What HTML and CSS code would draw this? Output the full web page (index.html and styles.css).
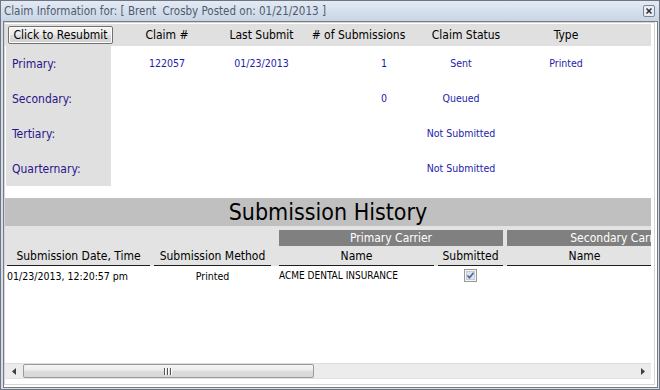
FILE: index.html
```html
<html>

<head>
  <link rel="stylesheet" href="styles.css">
</head>

<body>
  <div class="window">
    <div class="titlebar">
      <span class="title">Claim Information for: [ Brent  Crosby Posted on: 01/21/2013 ]</span>
      <svg class="close-btn" width="12" height="12" viewBox="0 0 12 12">
        <rect x="0.5" y="0.5" width="11" height="11" rx="1.5" fill="#e9eef5" stroke="#7a8596" />
        <path d="M3.5 3.5l5 5M8.5 3.5l-5 5" stroke="#303030" stroke-width="1.5" />
      </svg>
    </div>

    <div class="frame">
      <div class="pane">
        <div class="view">

          <!-- claim grid -->
          <div class="claims">
            <div class="claims-head">
              <div><button class="resubmit">Click to Resubmit</button></div>
              <div class="col">Claim #</div>
              <div class="col">Last Submit</div>
              <div class="col"># of Submissions</div>
              <div class="col">Claim Status</div>
              <div class="col">Type</div>
            </div>
            <div class="claim-row">
              <div class="claim-label">Primary:</div>
              <div class="val">122057</div>
              <div class="val">01/23/2013</div>
              <div class="val v-count">1</div>
              <div class="val v-status">Sent</div>
              <div class="val">Printed</div>
            </div>
            <div class="claim-row">
              <div class="claim-label">Secondary:</div>
              <div class="val"></div>
              <div class="val"></div>
              <div class="val v-count">0</div>
              <div class="val v-status">Queued</div>
              <div class="val"></div>
            </div>
            <div class="claim-row">
              <div class="claim-label">Tertiary:</div>
              <div class="val"></div>
              <div class="val"></div>
              <div class="val v-count"></div>
              <div class="val v-status">Not Submitted</div>
              <div class="val"></div>
            </div>
            <div class="claim-row">
              <div class="claim-label">Quarternary:</div>
              <div class="val"></div>
              <div class="val"></div>
              <div class="val v-count"></div>
              <div class="val v-status">Not Submitted</div>
              <div class="val"></div>
            </div>
          </div>

          <!-- history -->
          <div class="history-title">Submission History</div>
          <div class="history-head">
            <div class="carrier carrier-1">Primary Carrier</div>
            <div class="carrier carrier-2">Secondary Carrier</div>
            <div class="hcol c-date">Submission Date, Time</div>
            <div class="hcol c-method">Submission Method</div>
            <div class="hcol c-name">Name</div>
            <div class="hcol c-sub">Submitted</div>
            <div class="hcol c-name2">Name</div>
            <div class="hcol c-sub2">Submitted</div>
          </div>
          <div class="history-row">
            <div class="d-date">01/23/2013, 12:20:57 pm</div>
            <div class="d-method">Printed</div>
            <div class="d-name">ACME DENTAL INSURANCE</div>
            <div class="d-sub">
              <svg width="13" height="13" viewBox="0 0 13 13">
                <rect x="0.5" y="0.5" width="12" height="12" fill="#f4f4f4" stroke="#9a9a9a" />
                <rect x="2.5" y="2.5" width="8" height="8" fill="#dfe3ea" stroke="#c4c9d2" />
                <path d="M3.5 6.5l2 2.2 4-5" fill="none" stroke="#4a62a8" stroke-width="1.6" />
              </svg>
            </div>
            <div></div>
            <div></div>
          </div>

          <!-- horizontal scrollbar -->
          <div class="hscroll">
            <div class="arrow">
              <svg width="4" height="7" viewBox="0 0 4 7"><path d="M4 0L0 3.5L4 7z" fill="#404040" /></svg>
            </div>
            <div class="thumb">
              <svg width="9" height="7" viewBox="0 0 9 7">
                <path d="M0.5 0v7M3.5 0v7M6.5 0v7" stroke="#555" />
                <path d="M1.5 0v7M4.5 0v7M7.5 0v7" stroke="#fff" />
              </svg>
            </div>
            <div class="track"></div>
            <div class="arrow">
              <svg width="4" height="7" viewBox="0 0 4 7"><path d="M0 0L4 3.5L0 7z" fill="#404040" /></svg>
            </div>
          </div>

        </div>
      </div>
    </div>
  </div>
</body>

</html>
```

FILE: styles.css
```css
* {
  box-sizing: border-box;
}

html,
body {
  margin: 0;
  padding: 0;
}

body {
  width: 660px;
  height: 390px;
  overflow: hidden;
  background: #ffffff;
  font-family: "DejaVu Sans Condensed", "DejaVu Sans", sans-serif;
}

.window {
  width: 660px;
  height: 390px;
  border: 1px solid #6e7683;
  background: linear-gradient(#e3eaf3, #c8d5e6 20px, #d3deeb 21px, #d3deeb);
  display: flex;
  flex-direction: column;
}

/* title bar */
.titlebar {
  height: 20px;
  flex: none;
  display: flex;
  align-items: center;
  justify-content: space-between;
  padding: 0 4px 0 3px;
}

.title {
  font-size: 11.5px;
  color: #4f5b6c;
  white-space: pre;
}

.close-btn {
  display: block;
}

.frame {
  flex: 1;
  margin: 0 1px 1px 2px;
  border: 1px solid #7b7b7b;
  background: #ffffff;
  padding: 0 2px 2px 0;
  display: flex;
}

.pane {
  flex: 1;
  border: 1px solid #d6d6d6;
  padding: 0 3px 5px 0;
  display: flex;
  min-width: 0;
}

.view {
  flex: 1;
  min-width: 0;
  overflow: hidden;
  display: flex;
  flex-direction: column;
}

/* claim grid */
.claims {
  margin-top: 1px;
}

.claims-head,
.claim-row {
  display: grid;
  grid-template-columns: 106px 112px 77px 117px 98px 102px 1fr;
}

.claims-head {
  height: 22px;
  background: #e0e0e0;
  align-items: center;
  font-size: 12px;
  color: #000000;
}

.claims-head .col {
  text-align: center;
}

.resubmit {
  display: block;
  margin-left: 3px;
  width: 105px;
  height: 18px;
  padding: 0;
  border: 1px solid #707070;
  border-radius: 2px;
  background: linear-gradient(#f3f3f3, #ebebeb 50%, #dddddd 51%, #cfcfcf);
  box-shadow: inset 0 0 0 1px #fcfcfc;
  font-family: inherit;
  font-size: 12px;
  color: #000000;
}

.claim-row {
  height: 35px;
  align-items: center;
}

.claim-label {
  margin-left: 1px;
  height: 100%;
  background: #e0e0e0;
  display: flex;
  align-items: center;
  padding: 1px 0 0 6px;
  font-size: 12px;
  color: #28148a;
}

.val {
  text-align: center;
  font-size: 10.5px;
  color: #1c1cab;
  padding-bottom: 2px;
}

.v-count {
  padding-left: 51px;
}

.v-status {
  padding-right: 10px;
}

/* submission history */
.history-title {
  margin-top: 12px;
  height: 28px;
  flex: none;
  background: #c0c0c0;
  text-align: center;
  font-size: 23px;
  line-height: 28px;
  color: #000000;
}

.history-head,
.history-row {
  display: grid;
  grid-template-columns: 143px 121px 155px 65px 155px 65px;
  column-gap: 4px;
  padding-left: 2px;
  flex: none;
}

.history-head {
  height: 40px;
  padding-top: 4px;
  grid-template-rows: 16px 20px;
  background: #e3e3e3;
  font-size: 12px;
}

.carrier {
  grid-row: 1;
  background: #808080;
  color: #ffffff;
  text-align: center;
  line-height: 16px;
  white-space: nowrap;
}

.carrier-1 {
  grid-column: 3 / span 2;
}

.carrier-2 {
  grid-column: 5 / span 2;
}

.hcol {
  grid-row: 2;
  border-bottom: 1px solid #1e1e1e;
  text-align: center;
  line-height: 20px;
  color: #000000;
  white-space: nowrap;
}

.c-method {
  margin-right: 4px;
}

.history-row {
  height: 19px;
  align-items: center;
  font-size: 10.5px;
  color: #000000;
  white-space: nowrap;
}

.d-method {
  margin-right: 4px;
  text-align: center;
}

.d-name {
  font-size: 10px;
}

.d-sub {
  display: flex;
  justify-content: center;
}

.d-sub svg {
  display: block;
}

/* horizontal scrollbar */
.hscroll {
  margin-top: auto;
  height: 16px;
  flex: none;
  background: #ececec;
  border-top: 1px solid #dcdcdc;
  border-bottom: 1px solid #e2e2e2;
  display: flex;
  align-items: center;
}

.arrow {
  width: 17px;
  height: 100%;
  display: flex;
  align-items: center;
  justify-content: center;
}

.arrow svg,
.thumb svg {
  display: block;
}

.thumb {
  margin-left: 1px;
  width: 291px;
  height: 14px;
  border: 1px solid #9a9a9a;
  border-radius: 2px;
  background: linear-gradient(#f6f6f6, #e9e9e9 50%, #dcdcdc 51%, #d8d8d8);
  display: flex;
  align-items: center;
  justify-content: center;
}

.track {
  flex: 1;
}
```
